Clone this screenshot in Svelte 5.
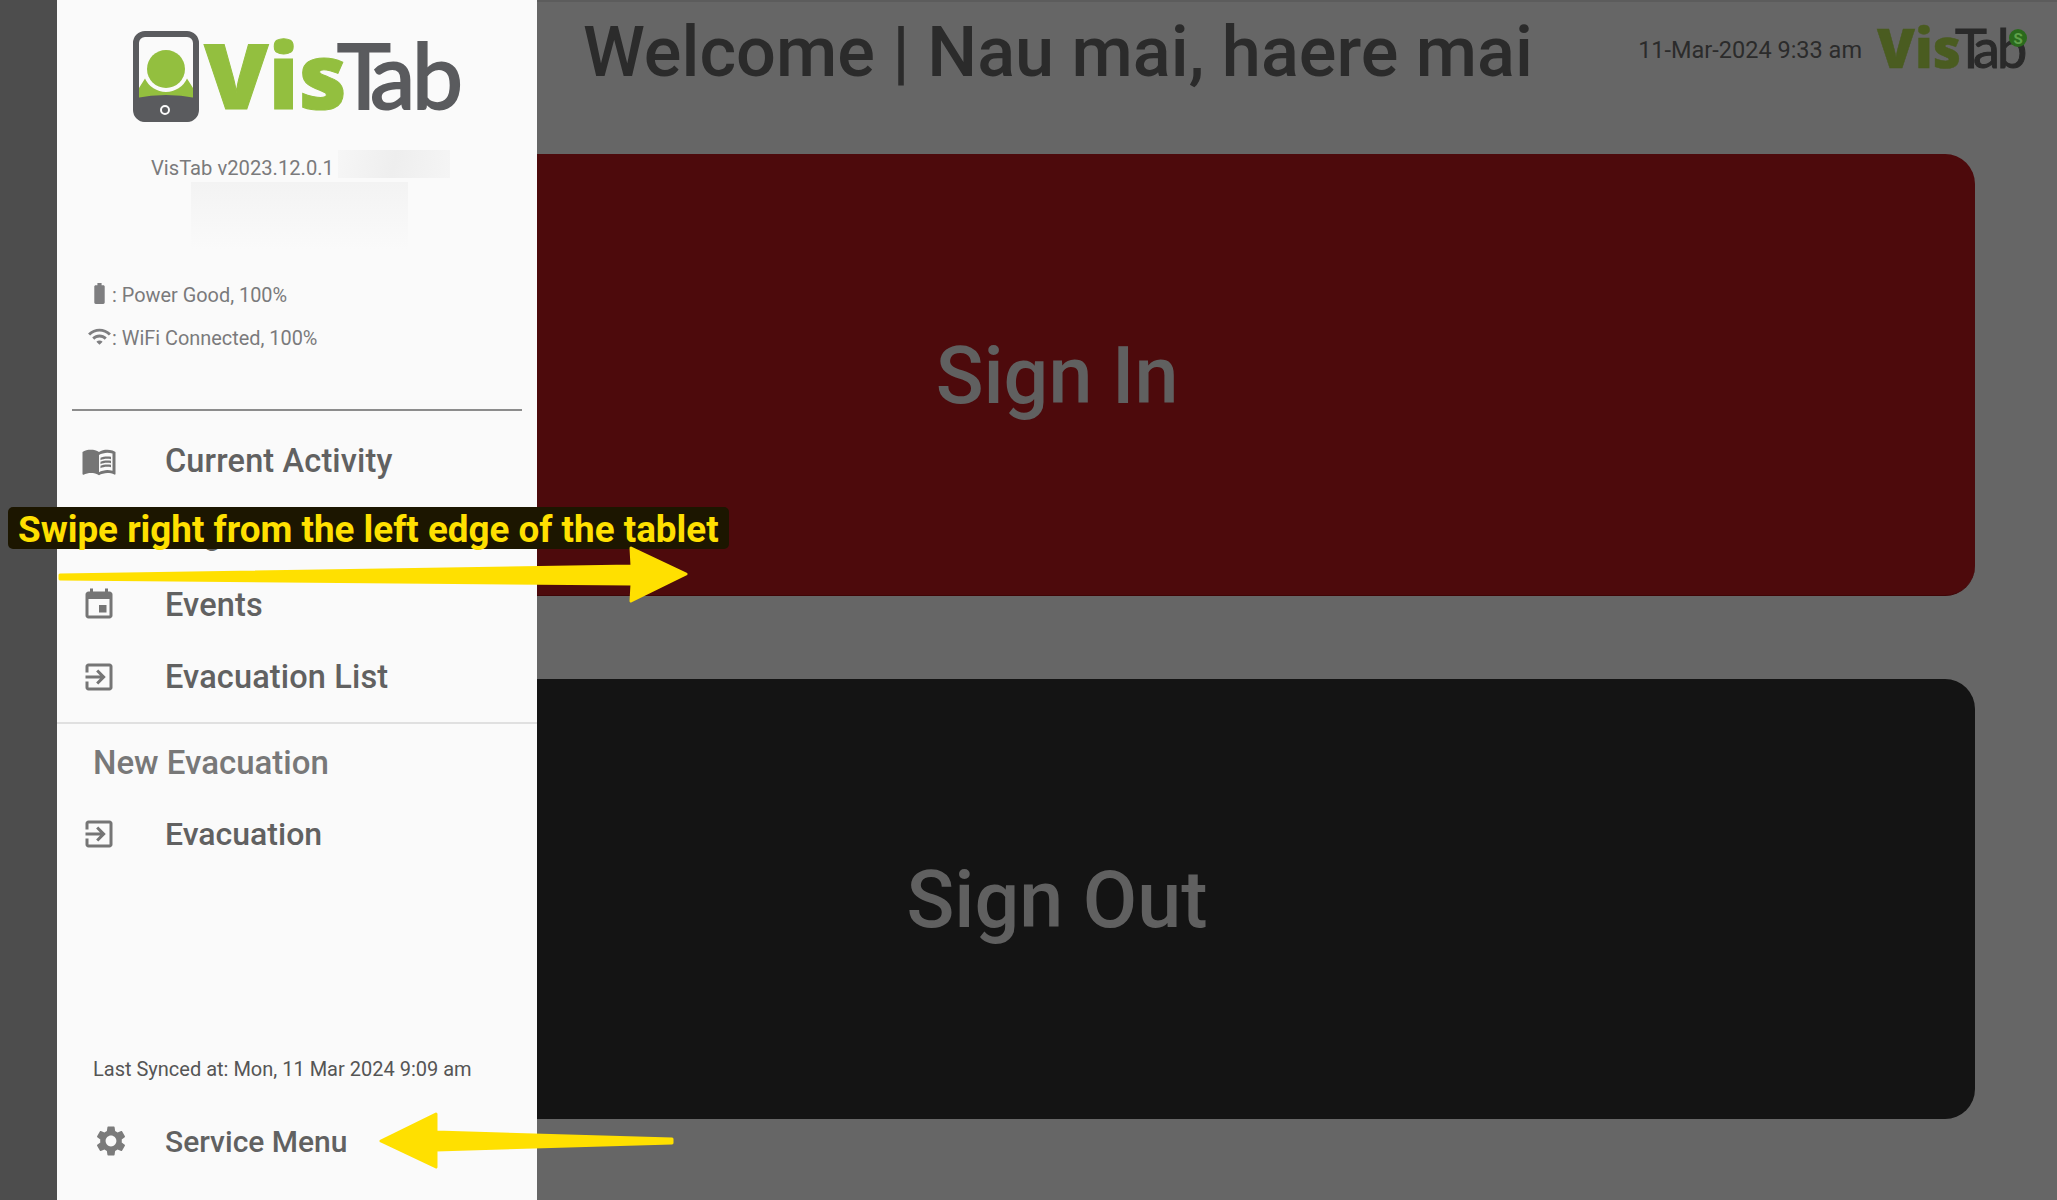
<script>
  const menu = [
    { label: 'Current Activity', icon: 'book' },
    { label: 'Register', icon: 'exit' },
    { label: 'Events', icon: 'event' },
    { label: 'Evacuation List', icon: 'exit' }
  ];

  const icons = {
    book: 'M21 5c-1.11-.35-2.33-.5-3.5-.5-1.95 0-4.05.4-5.5 1.5-1.45-1.1-3.55-1.5-5.5-1.5S2.45 4.9 1 6v14.65c0 .25.25.5.5.5.1 0 .15-.05.25-.05C3.1 20.45 5.05 20 6.5 20c1.95 0 4.05.4 5.5 1.5 1.35-.85 3.8-1.5 5.5-1.5 1.65 0 3.35.3 4.75 1.05.1.05.15.05.25.05.25 0 .5-.25.5-.5V6c-.6-.45-1.25-.75-2-1zm0 13.5c-1.1-.35-2.3-.5-3.5-.5-1.7 0-4.15.65-5.5 1.5V8c1.35-.85 3.8-1.5 5.5-1.5 1.2 0 2.4.15 3.5.5v11.5z M17.5 10.5c.88 0 1.73.09 2.5.26V9.24c-.79-.15-1.64-.24-2.5-.24-1.7 0-3.24.29-4.5.83v1.66c1.13-.64 2.7-.99 4.5-.99z M13 12.49v1.66c1.13-.64 2.7-.99 4.5-.99.88 0 1.73.09 2.5.26V11.9c-.79-.15-1.64-.24-2.5-.24-1.7 0-3.24.3-4.5.83z M17.5 14.33c-1.7 0-3.24.29-4.5.83v1.66c1.13-.64 2.7-.99 4.5-.99.88 0 1.73.09 2.5.26v-1.52c-.79-.16-1.64-.24-2.5-.24z',
    event: 'M17 12h-5v5h5v-5zM16 1v2H8V1H6v2H5c-1.11 0-1.99.9-1.99 2L3 19c0 1.1.89 2 2 2h14c1.1 0 2-.9 2-2V5c0-1.1-.9-2-2-2h-1V1h-2zm3 18H5V8h14v11z',
    exit: 'M10.09 15.59L11.5 17l5-5-5-5-1.41 1.41L12.67 11H3v2h9.67l-2.58 2.59zM19 3H5c-1.11 0-2 .9-2 2v4h2V5h14v14H5v-4H3v4c0 1.1.89 2 2 2h14c1.1 0 2-.9 2-2V5c0-1.1-.9-2-2-2z',
    gear: 'M19.14 12.94c.04-.3.06-.61.06-.94 0-.32-.02-.64-.07-.94l2.03-1.58c.18-.14.23-.41.12-.61l-1.92-3.32c-.12-.22-.37-.29-.59-.22l-2.39.96c-.5-.38-1.03-.7-1.62-.94l-.36-2.54c-.04-.24-.24-.41-.48-.41h-3.84c-.24 0-.43.17-.47.41l-.36 2.54c-.59.24-1.13.57-1.62.94l-2.39-.96c-.22-.08-.47 0-.59.22L2.74 8.87c-.12.21-.08.47.12.61l2.03 1.58c-.05.3-.09.63-.09.94s.02.64.07.94l-2.03 1.58c-.18.14-.23.41-.12.61l1.92 3.32c.12.22.37.29.59.22l2.39-.96c.5.38 1.03.7 1.62.94l.36 2.54c.05.24.24.41.48.41h3.84c.24 0 .44-.17.47-.41l.36-2.54c.59-.24 1.13-.56 1.62-.94l2.39.96c.22.08.47 0 .59-.22l1.92-3.32c.12-.22.07-.47-.12-.61l-2.01-1.58zM12 15.6c-1.98 0-3.6-1.62-3.6-3.6s1.62-3.6 3.6-3.6 3.6 1.62 3.6 3.6-1.62 3.6-3.6 3.6z',
    battery: 'M15.67 4H14V2h-4v2H8.33C7.6 4 7 4.6 7 5.33v15.33C7 21.4 7.6 22 8.33 22h7.33c.74 0 1.34-.6 1.34-1.33V5.33C17 4.6 16.4 4 15.67 4z',
    wifi: 'M1 9l2 2c4.97-4.97 13.03-4.97 18 0l2-2C16.93 2.93 7.08 2.93 1 9zm8 8l3 3 3-3c-1.65-1.66-4.34-1.66-6 0zm-4-4l2 2c2.76-2.76 7.24-2.76 10 0l2-2C15.14 9.14 8.87 9.14 5 13z'
  };
</script>

{#snippet icon(name, cls)}
  <svg class={cls} viewBox="0 0 24 24"><path d={icons[name]} /></svg>
{/snippet}

<div class="screen">
  <div class="edge"></div>

  <main class="page">
    <header class="topbar">
      <h1>Welcome | Nau mai, haere mai</h1>
      <div class="topbar-right">
        <span class="clock">11-Mar-2024 9:33 am</span>
        <svg class="mini-logo" viewBox="0 0 150 42">
          <text class="vis dim" x="0" y="39" font-size="54" textLength="84" lengthAdjust="spacingAndGlyphs">Vis</text>
          <text class="tab dim" x="78 96 120" y="39" font-size="54">Tab</text>
          <circle cx="141" cy="9" r="9" fill="#2a6a1c" />
          <text class="badge" x="141" y="14.5" text-anchor="middle">S</text>
        </svg>
      </div>
    </header>

    <button class="action sign-in">Sign In</button>
    <button class="action sign-out">Sign Out</button>
  </main>

  <aside class="drawer">
    <svg class="logo" viewBox="0 0 330 92">
      <rect x="3" y="3" width="60" height="85" rx="9" fill="none" stroke="#5a5b5e" stroke-width="6" />
      <path d="M6 57 L12 47.4 A23 23 0 0 0 54 47.4 L60 57 L60 68 L6 68 Z" fill="#93bf3f" />
      <circle cx="33" cy="38" r="19" fill="#93bf3f" />
      <path d="M3 67 Q33 61 63 67 L63 80 Q63 91 52 91 L14 91 Q3 91 3 80 Z" fill="#5a5b5e" />
      <circle cx="32" cy="79" r="4" fill="none" stroke="#fafafa" stroke-width="2" />
      <text class="vis" x="71" y="78" font-size="91" textLength="143" lengthAdjust="spacingAndGlyphs">Vis</text>
      <text class="tab" x="204 237 279" y="78" font-size="91">Tab</text>
    </svg>

    <div class="version">
      <span class="version-text">VisTab v2023.12.0.1</span>
      <span class="smudge small"></span>
    </div>
    <div class="smudge large"></div>

    <div class="status first">
      {@render icon('battery', 'status-icon')}
      <span>: Power Good, 100%</span>
    </div>
    <div class="status">
      {@render icon('wifi', 'status-icon')}
      <span>: WiFi Connected, 100%</span>
    </div>

    <div class="rule"></div>

    <nav class="menu">
      {#each menu as item}
        <div class="row">
          {@render icon(item.icon, 'row-icon')}
          <span>{item.label}</span>
        </div>
      {/each}
    </nav>

    <div class="rule-soft"></div>
    <div class="subheader">New Evacuation</div>
    <div class="row plain">
      {@render icon('exit', 'row-icon')}
      <span>Evacuation</span>
    </div>

    <div class="drawer-foot">
      <div class="synced">Last Synced at: Mon, 11 Mar 2024 9:09 am</div>
      <div class="row service">
        {@render icon('gear', 'gear-icon')}
        <span>Service Menu</span>
      </div>
    </div>
  </aside>

  <div class="callout">Swipe right from the left edge of the tablet</div>

  <svg class="arrows" viewBox="0 0 2057 1200">
    <path d="M60 575 L632 566 L631 548 L686 574 L631 601 L632 584 L60 579 Z" />
    <path d="M672 1139 L436 1132 L436 1114 L381 1141 L436 1167 L436 1150 L672 1143 Z" />
  </svg>
</div>

<style>
  :global(body) {
    margin: 0;
    background: #666;
  }

  .screen {
    position: relative;
    display: flex;
    width: 2057px;
    height: 1200px;
    overflow: hidden;
    font-family: Roboto, "Liberation Sans", sans-serif;
  }

  .edge {
    width: 57px;
    flex: none;
    background: #4d4d4d;
  }

  .page {
    flex: 1;
    display: flex;
    flex-direction: column;
    box-sizing: border-box;
    padding: 0 82px 81px 82px;
    background: #666;
    border-top: 2px solid #5c5c5c;
  }

  .topbar {
    height: 152px;
    margin-right: -52px;
    display: flex;
    justify-content: space-between;
    align-items: flex-start;
    flex: none;
  }

  h1 {
    margin: 15px 0 0 444px;
    font-size: 70.3px;
    line-height: 70px;
    font-weight: 500;
    color: #2b2b2b;
  }

  .topbar-right {
    display: flex;
    align-items: center;
    gap: 15px;
    margin-top: 27px;
  }

  .clock {
    font-size: 23.5px;
    color: #2b2b2b;
  }

  .mini-logo {
    width: 150px;
    height: 42px;
    overflow: visible;
  }

  .action {
    flex: 1;
    border: none;
    border-radius: 30px;
    padding: 3px 0 0;
    font-family: inherit;
    font-size: 79px;
    font-weight: 500;
    color: #606060;
  }

  .sign-in {
    background: #4d0a0c;
    border-bottom: 1px solid #3f0507;
  }

  .sign-out {
    margin-top: 83px;
    background: #141414;
  }

  .drawer {
    position: absolute;
    left: 57px;
    top: 0;
    bottom: 0;
    width: 480px;
    display: flex;
    flex-direction: column;
    background: #fafafa;
  }

  .logo {
    width: 330px;
    height: 92px;
    margin: 31px 0 0 76px;
    flex: none;
    overflow: visible;
  }

  .vis {
    font-family: "Open Sans", sans-serif;
    font-weight: 800;
    fill: #93bf3f;
    stroke: #93bf3f;
    stroke-width: 1;
  }

  .tab {
    font-family: Lato, sans-serif;
    font-weight: 400;
    fill: #5a5b5e;
    stroke: #5a5b5e;
    stroke-width: 2;
  }

  .vis.dim {
    fill: #4a5c20;
    stroke: #4a5c20;
    stroke-width: 0.5;
  }

  .tab.dim {
    fill: #2a2a2a;
    stroke: #2a2a2a;
    stroke-width: 1;
  }

  .badge {
    font-family: Roboto, sans-serif;
    font-size: 15px;
    font-weight: 700;
    fill: #5fa04a;
  }

  .version {
    display: flex;
    gap: 4px;
    height: 32px;
    margin: 27px 0 0 94px;
    font-size: 20.2px;
    color: #7a7a7c;
  }

  .version-text {
    line-height: 36px;
  }

  .smudge.small {
    width: 112px;
    height: 28px;
    background: linear-gradient(100deg, #f6f6f6, #eeeeee 50%, #f5f5f5);
  }

  .smudge.large {
    width: 217px;
    height: 80px;
    margin-left: 134px;
    background: linear-gradient(180deg, #f3f3f3, #fafafa 85%);
    flex: none;
  }

  .status {
    display: flex;
    align-items: center;
    height: 43px;
    padding-left: 30px;
    font-size: 19.9px;
    color: #7a7a7c;
  }

  .status.first {
    margin-top: 12px;
  }

  .status-icon {
    width: 25px;
    height: 25px;
    margin-top: -5px;
    flex: none;
    fill: #7e7e80;
  }

  .rule {
    height: 2px;
    margin: 49px 15px 14px;
    background: #8c8c8c;
    flex: none;
  }

  .row {
    display: flex;
    align-items: center;
    height: 72px;
    flex: none;
    padding-left: 23.5px;
    font-size: 32.5px;
    font-weight: 500;
    color: #616161;
  }

  .menu .row {
    letter-spacing: 0.15px;
  }

  .row.plain {
    font-size: 32px;
  }

  .row-icon {
    width: 36px;
    height: 36px;
    margin-right: 48.5px;
    flex: none;
    fill: #757575;
  }

  .rule-soft {
    height: 2px;
    margin-top: 9px;
    background: #e0e0e0;
    flex: none;
  }

  .subheader {
    height: 74px;
    line-height: 78px;
    padding-left: 36px;
    font-size: 33px;
    font-weight: 500;
    color: #787878;
  }

  .drawer-foot {
    margin-top: auto;
    padding-bottom: 23px;
  }

  .synced {
    padding-left: 36px;
    margin-bottom: 22px;
    font-size: 20px;
    line-height: 28px;
    color: #555;
  }

  .gear-icon {
    width: 36px;
    height: 36px;
    margin-right: 36px;
    flex: none;
    fill: #7b7b7b;
  }

  .row.service {
    padding-left: 36px;
    font-size: 30px;
  }

  .callout {
    position: absolute;
    left: 8px;
    top: 507px;
    width: 721px;
    height: 42px;
    box-sizing: border-box;
    padding-left: 10px;
    border-radius: 5px;
    background: #1c1600;
    color: #ffe000;
    font-family: Roboto, sans-serif;
    font-size: 36.8px;
    font-weight: 700;
    line-height: 45px;
    white-space: nowrap;
  }

  .arrows {
    position: absolute;
    left: 0;
    top: 0;
    width: 2057px;
    height: 1200px;
    pointer-events: none;
  }

  .arrows path {
    fill: #ffe000;
    stroke: #ffe000;
    stroke-width: 3;
    stroke-linejoin: round;
  }
</style>
